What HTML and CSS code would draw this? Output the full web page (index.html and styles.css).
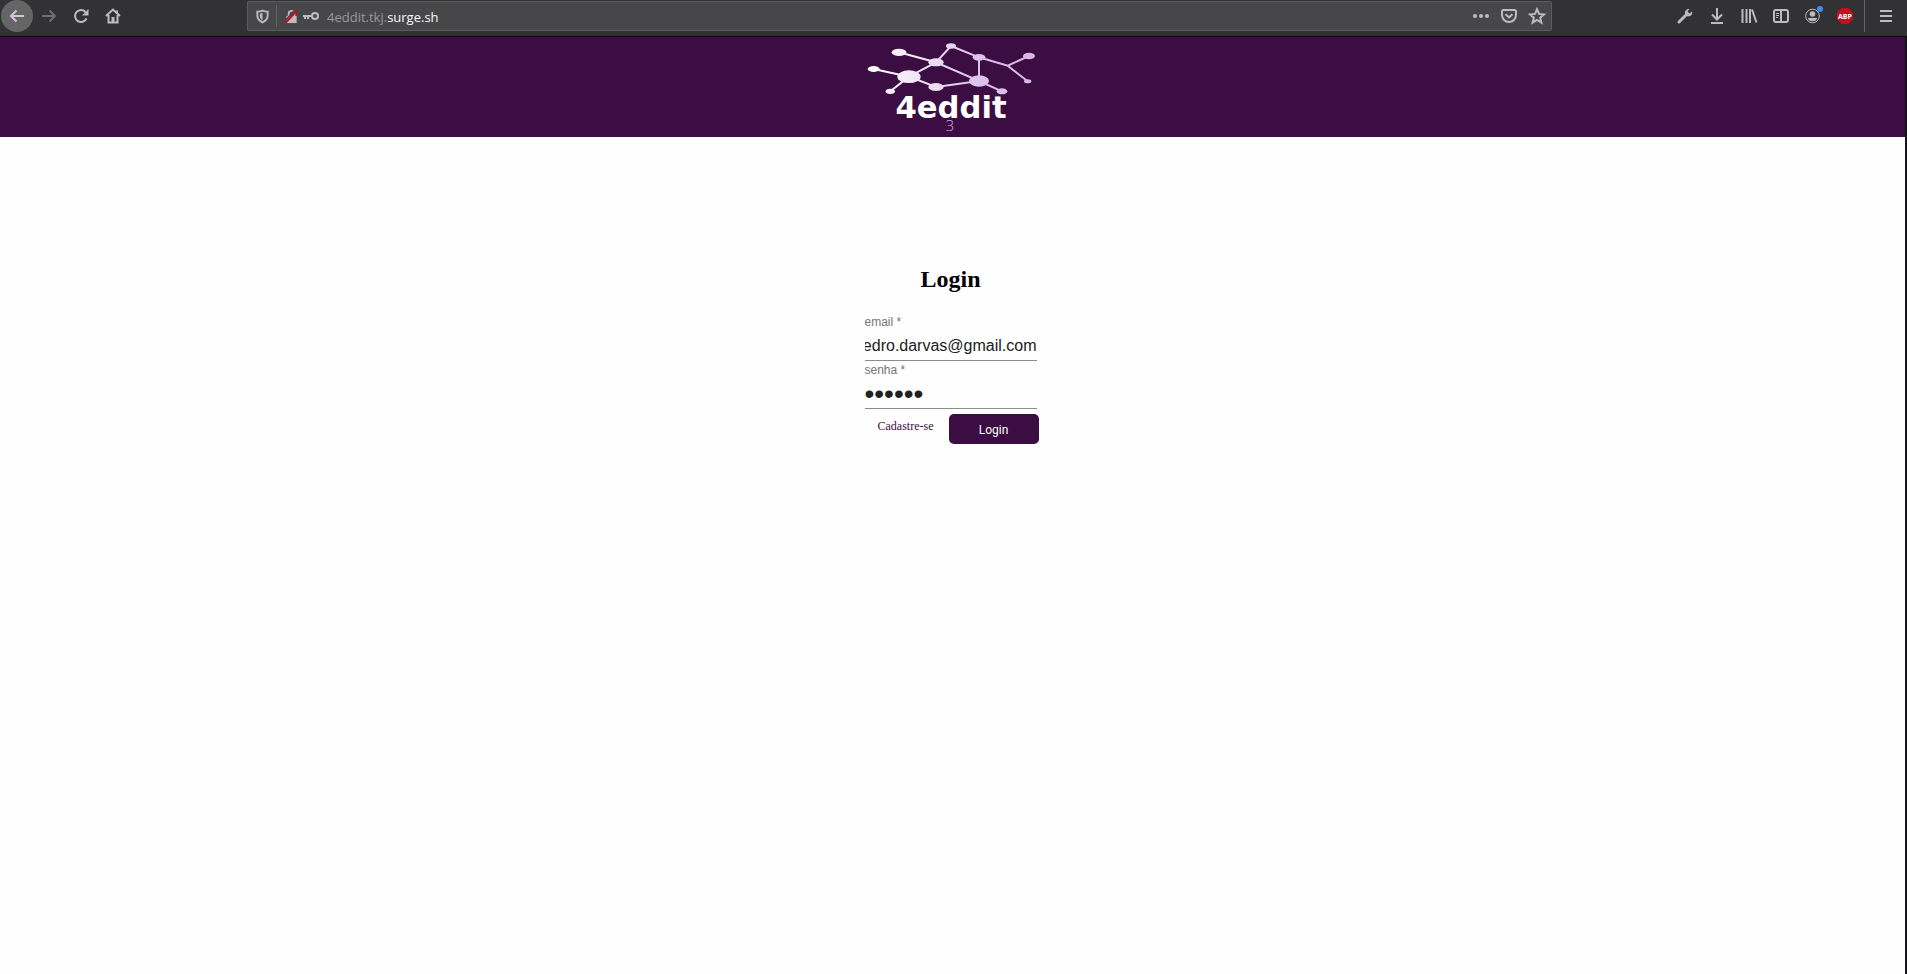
FILE: index.html
```html
<!DOCTYPE html>
<html lang="pt-BR">
<head>
<meta charset="utf-8">
<title>4eddit</title>
<link rel="stylesheet" href="styles.css">
</head>
<body>
<nav class="toolbar" aria-label="Browser">
  <div class="nav-buttons">
    <button class="tool back" aria-label="Back"><svg viewBox="0 0 16 16"><path d="M15 8H2M7.500 2.500L2 8l5.500 5.500"/></svg></button>
    <button class="tool dim" aria-label="Forward"><svg viewBox="0 0 16 16"><path d="M1 8h13M8.500 2.500L14 8l-5.500 5.500"/></svg></button>
    <button class="tool" aria-label="Reload"><svg viewBox="0 0 16 16"><path d="M13.500 10.500A6 6 0 1 1 12.500 4"/><path class="solid" d="M15.500 1v6.500H9z"/></svg></button>
    <button class="tool" aria-label="Home"><svg viewBox="0 0 16 16"><path d="M1 8l7-6.500L15 8M3.500 7v7.500h9V7M12 5V2.500"/><path class="solid" d="M6.500 9h3v5h-3z"/></svg></button>
  </div>
  <div class="address">
    <button class="tool small" aria-label="Protection"><svg viewBox="0 0 16 16"><path d="M8 1.800c2 1 3.500 1 5.500 1V7c0 4-2.500 6-5.500 7.300C5 13 2.500 11 2.500 7V2.800c2 0 3.500 0 5.500-1z"/><path class="solid" d="M8 4v8C6 11 5.200 9.500 5.200 7.500V5z"/></svg></button>
    <span class="divider"></span>
    <button class="tool small" aria-label="Insecure connection"><svg viewBox="0 0 16 16"><path d="M5 8V5a3 3 0 0 1 6 0v3"/><path class="solid" d="M2.500 7.500h11V15h-11z"/><path class="gap" d="M0 14L12.500 .500"/><path class="strike" d="M1.500 15L14.500 1"/></svg></button>
    <button class="tool key" aria-label="Saved password"><svg viewBox="0 0 16 16"><circle cx="12" cy="8" r="3"/><path d="M9 8H0M2 8v3M5 8v3"/></svg></button>
    <span class="url">4eddit.tkj.<b>surge.sh</b></span>
    <div class="page-actions">
      <button class="tool" aria-label="Page actions"><svg viewBox="0 0 16 16"><g class="solid"><circle cx="2" cy="8" r="2"/><circle cx="8" cy="8" r="2"/><circle cx="14" cy="8" r="2"/></g></svg></button>
      <button class="tool" aria-label="Save to Pocket"><svg viewBox="0 0 16 16"><path d="M2.500 2h11q1.500 0 1.500 1.500V7a7 7 0 0 1-14 0V3.500Q1 2 2.500 2zM4.500 6.200L8 9.500l3.500-3.300"/></svg></button>
      <button class="tool" aria-label="Bookmark"><svg viewBox="0 0 16 16"><path d="M8 1.200l2 4.700 5 .5-3.800 3.300 1.200 5L8 12l-4.400 2.700 1.200-5L1 6.400l5-.5z"/></svg></button>
    </div>
  </div>
  <div class="extras">
    <button class="tool" aria-label="Developer tools"><svg viewBox="0 0 16 16"><path class="wrench" d="M2 14l6.500-6.500"/><path class="solid" d="M12.500 1L10.500 3.500l2 2L15 3.500c1 3-1.500 5.500-5 4.700L8 6C7.500 3 9.500.500 12.500 1z"/></svg></button>
    <button class="tool" aria-label="Downloads"><svg viewBox="0 0 16 16"><path d="M8 0v11M3 6.500l5 5 5-5M2 15h12"/></svg></button>
    <button class="tool" aria-label="Library"><svg viewBox="0 0 16 16"><path d="M1.500 1v14M5.500 1v14M9 1v14M11 1.500l4.500 13"/></svg></button>
    <button class="tool" aria-label="Sidebar"><svg viewBox="0 0 16 16"><rect x="1" y="2" width="14" height="12" rx="2"/><path d="M8 2v12"/><path class="fine" d="M3 5.500h3M3 7.500h3M3 9.500h2"/></svg></button>
    <button class="tool" aria-label="Account"><svg viewBox="0 0 16 16"><circle class="fine" cx="7.500" cy="8" r="6.800"/><g class="solid"><circle cx="7.500" cy="6" r="2.800"/><path d="M3 10h9c0 2-2 3.300-4.500 3.300S3 12 3 10z"/></g><circle class="dot" cx="15" cy="1" r="3"/></svg></button>
    <button class="tool" aria-label="Adblock Plus"><svg viewBox="0 0 16 16"><path class="stop" d="M4.700 0h6.600L16 4.700v6.600L11.300 16H4.700L0 11.300V4.700z"/><text class="abp" x="8" y="10.500">ABP</text></svg></button>
    <span class="divider tall"></span>
    <button class="tool" aria-label="Menu"><svg viewBox="0 0 16 16"><path d="M2 3h12M2 8h12M2 13h12"/></svg></button>
  </div>
</nav>
<div class="page">
  <header class="header">
    <svg class="logo" viewBox="45 21 528 300" role="img" aria-label="4eddit 3">
      <defs><linearGradient id="fade" gradientUnits="userSpaceOnUse" x1="55" y1="0" x2="550" y2="0"><stop offset="0" stop-color="#fff"/><stop offset=".4" stop-color="#ecdcf3"/><stop offset=".68" stop-color="#dcc2e9"/><stop offset="1" stop-color="#d5b9e2"/></linearGradient></defs>
      <path class="edges" d="M71 117L177 140M147 67L258 97L303 48L387 82L473 107L537 78M473 107L533 154M121 184L177 140L258 97L387 153L387 82M177 140L258 171L387 153L456 184"/>
      <g fill="url(#fade)">
        <ellipse cx="71" cy="117" rx="18" ry="9"/><ellipse cx="147" cy="67" rx="22" ry="11"/>
        <ellipse cx="177" cy="140" rx="35" ry="19"/><ellipse cx="258" cy="97" rx="23" ry="12"/>
        <ellipse cx="303" cy="48" rx="15" ry="8"/><ellipse cx="387" cy="82" rx="19" ry="10"/>
        <ellipse cx="537" cy="78" rx="18" ry="10"/><ellipse cx="533" cy="154" rx="11" ry="6"/>
        <ellipse cx="387" cy="153" rx="30" ry="17"/><ellipse cx="456" cy="184" rx="16" ry="9"/>
        <ellipse cx="258" cy="171" rx="23" ry="12"/><ellipse cx="121" cy="184" rx="14" ry="8"/>
      </g>
      <text class="brand" x="303" y="263">4eddit</text>
      <text class="edition" x="300" y="302">3</text>
    </svg>
  </header>
  <main>
    <form class="login">
      <h1>Login</h1>
      <div class="field">
        <label for="email">email *</label>
        <input id="email" type="text" dir="rtl" value="pedro.darvas@gmail.com">
      </div>
      <div class="field">
        <label for="senha">senha *</label>
        <input id="senha" type="password" value="abcdef">
      </div>
      <div class="actions">
        <a href="#cadastro">Cadastre-se</a>
        <button class="submit" type="submit">Login</button>
      </div>
    </form>
  </main>
</div>
</body>
</html>
```
FILE: styles.css
```css
* { box-sizing: border-box; }

body {
  margin: 0;
  min-height: 100vh;
  display: flex;
  flex-direction: column;
  background: #fefefe;
  font-family: "Liberation Serif", serif;
}

button {
  border: 0;
  padding: 0;
  background: none;
}

.toolbar {
  display: flex;
  align-items: flex-start;
  height: 37px;
  background: #323234;
  border-bottom: 1px solid #0c0c0d;
}

.nav-buttons, .extras, .page-actions {
  display: flex;
  align-items: center;
  height: 32px;
}

.nav-buttons { width: 247px; padding-left: 1px; }
.extras { margin-left: auto; padding-right: 5px; }

.tool {
  display: grid;
  place-items: center;
  flex: none;
  width: 32px;
  height: 32px;
}

.tool svg {
  width: 16px;
  height: 16px;
  overflow: visible;
  fill: none;
  stroke: #bcbcbf;
  stroke-width: 2;
}

.tool.small { width: 24px; }
.tool.key { width: 16px; }
.address .small svg { width: 15px; height: 15px; }
.tool.back {
  border-radius: 50%;
  background: #656566;
}
.tool.back svg { stroke: #d8c2e0; }
.tool.dim svg { stroke: #6f6f71; }
.tool svg .solid { fill: #bcbcbf; stroke: none; }
.tool svg .gap { stroke: #474749; }
.tool svg .strike { stroke: #d70022; }
.tool svg .fine { stroke-width: 1; }
.tool svg .wrench { stroke-width: 3; stroke-linecap: round; }
.tool svg .dot { fill: #3b8fe8; stroke: none; }
.tool svg .stop { fill: #c70d1f; stroke: none; }

.abp {
  font: bold 7px "Open Sans", sans-serif;
  text-anchor: middle;
  fill: #fff;
  stroke: none;
}

.address {
  display: flex;
  align-items: center;
  flex: 0 1 1305px;
  height: 30px;
  margin-top: 1px;
  padding-left: 2px;
  background: #474749;
  border: 1px solid #5b5b5d;
  border-radius: 2px;
}

.divider { width: 1px; height: 22px; margin: 0 2px; background: #636365; }
.divider.tall { height: 32px; margin: 0 5px 0 3px; }

.url {
  margin-left: 8px;
  padding-top: 2px;
  font: 13px/18px "Open Sans", sans-serif;
  color: #98989b;
}

.url b { font-weight: 400; color: #f9f9fa; }
.page-actions { margin-left: auto; }
.page-actions .tool { width: 28px; }

.page {
  flex: 1;
  border-right: 2px solid #15141a;
}

.header {
  display: flex;
  justify-content: center;
  background: #3b0d43;
}

.logo { width: 176px; height: 100px; }
.edges { fill: none; stroke: url(#fade); stroke-width: 6; }

.brand {
  font: bold 92px "DejaVu Sans", sans-serif;
  text-anchor: middle;
  fill: #fff;
}

.edition {
  font: 300 44px "Open Sans", sans-serif;
  text-anchor: middle;
  fill: #d5b9e2;
}

.login {
  width: 176px;
  margin: 128px auto 0;
}

.login h1 {
  width: 172px;
  margin: 0 0 20px;
  font-size: 24px;
  line-height: 28px;
  text-align: center;
  color: #000;
}

.field {
  width: 172px;
  height: 48px;
  font-family: "Liberation Sans", sans-serif;
}

.field label {
  display: block;
  padding-top: 2px;
  font-size: 12px;
  line-height: 14px;
  color: #757575;
}

.field input {
  display: block;
  width: 100%;
  height: 32px;
  padding: 8px 0 5px;
  border: 0;
  border-bottom: 1px solid #8c8c8c;
  outline: 0;
  background: none;
  font: 16px/18px "Liberation Sans", sans-serif;
  color: #212121;
}

.field input[type="password"] { font-size: 28px; }

.actions {
  display: flex;
  justify-content: space-between;
  padding: 5px 2px 0 13px;
}

.actions a {
  padding-top: 5px;
  font-size: 12px;
  line-height: 14px;
  color: #3b0d43;
  text-decoration: none;
}

.submit {
  width: 90px;
  height: 30px;
  padding-top: 1px;
  border-radius: 5px;
  background: #3b0d43;
  font: 12px/16px Roboto, sans-serif;
  color: #fff;
}
```
